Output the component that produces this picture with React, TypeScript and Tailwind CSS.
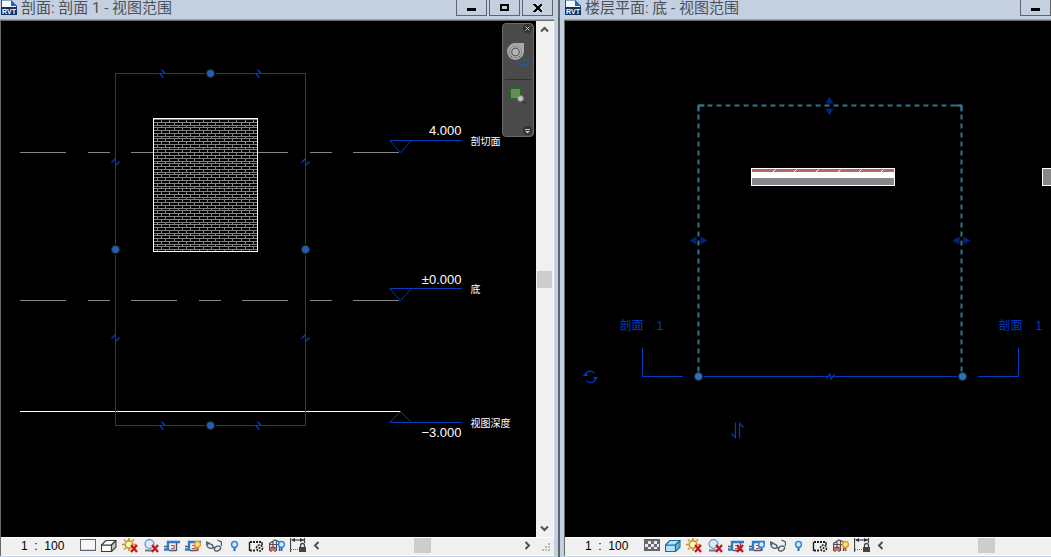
import type { ReactNode } from 'react';
import clsx from 'clsx';

const BLUE = '#003cc0';
const LABEL_FONT = '"Liberation Sans", "Noto Sans CJK SC", sans-serif';

function RvtLogo() {
  return (
    <svg width="16" height="16" viewBox="0 0 16 16" className="shrink-0" aria-hidden="true">
      <path d="M0.5 0H10L15.5 5V9H0.5Z" fill="#f4f8fc" stroke="#1d5593" />
      <path d="M10 0H16V6Z" fill="#c4d0e0" />
      <path d="M10 0L16 6H10Z" fill="#1d66b4" />
      <rect x="0" y="7" width="16" height="8" fill="#0d3468" />
      <text x="8" y="14" textAnchor="middle" fontSize="7" fontWeight="700" fill="#fff" fontFamily={LABEL_FONT}>RVT</text>
    </svg>
  );
}

function RedX() {
  return <path d="M9 7l6 7M15 7l-6 7" stroke="#c8141c" strokeWidth="2.2" fill="none" />;
}

function Bulb({ x = 0, y = 0, on = false }: { x?: number; y?: number; on?: boolean }) {
  return (
    <g transform={`translate(${x} ${y})`}>
      <circle cx="3.5" cy="3.5" r="2.9" fill={on ? '#ffe08c' : '#d8edff'} stroke={on ? '#f09a1a' : '#2f86dc'} strokeWidth="1.5" />
      <path d="M2.5 7h2v3h-2z" fill={on ? '#8a6a3a' : '#2468b4'} />
    </g>
  );
}

function Sun() {
  return (
    <>
      <circle cx="7" cy="6.5" r="3.8" fill="#fff3c8" stroke="#c89018" strokeWidth="1.5" />
      <path d="M7 0v2M7 11v2M0 6.5h2.500M12 6.5h2M2 1.5l1.500 1.500M10.500 3l1.500-1.500M2 11.500l1.500-1.500" stroke="#c89018" strokeWidth="1.6" />
      <RedX />
    </>
  );
}

function Crop({ children }: { children?: ReactNode }) {
  return (
    <>
      <path d="M0 8.5h3M5 12.5h7M12.5 5v8" stroke="#50565e" strokeWidth="1.4" fill="none" />
      <path d="M7 7.5h3v3H7" stroke="#c84848" strokeWidth="1.2" fill="none" />
      <path d="M0 11.500H4V4H16" stroke="#2e7cc4" strokeWidth="2.4" fill="none" />
      {children}
    </>
  );
}

function Cube({ fill }: { fill: string }) {
  return (
    <g stroke={fill === '#ffffff' ? '#3c3c3c' : '#1c6c9c'} strokeWidth="1.1" strokeLinejoin="round">
      <path d="M0.5 7h10v6.500h-10z" fill={fill} />
      <path d="M0.5 7l4.500-4.500h10l-4.500 4.500z" fill={fill} />
      <path d="M10.5 13.5l4.500-4.500v-6.500l-4.500 4.500z" fill={fill === '#ffffff' ? '#c4c4c8' : '#6cb4e4'} />
    </g>
  );
}

type ViewTool = { label: string; icon: ReactNode };

function viewTools(plan: boolean): ViewTool[] {
  return [
    {
      label: '详细程度',
      icon: (
        <>
          <rect x="0.5" y="1.5" width="15" height="11" fill={plan ? '#686c70' : '#f6f6f6'} stroke="#5c6470" />
          {plan && <path d="M4 3h3v3H4zM10 3h3v3h-3zM7 6h3v3H7zM4 9h3v2H4zM10 9h3v2h-3zM1 6h3v3H1zM13 6h2v3h-2z" fill="#e8e8e8" />}
          {!plan && <path d="M1 11.5h14" stroke="#d4d8dc" />}
        </>
      ),
    },
    { label: '视觉样式', icon: <Cube fill={plan ? '#b4e0fa' : '#ffffff'} /> },
    { label: '日光路径', icon: <Sun /> },
    {
      label: '阴影',
      icon: (
        <>
          <circle cx="6.5" cy="6" r="4.4" fill="#dcebf6" stroke="#5a9cd4" strokeWidth="1.4" />
          <path d="M2 12.5h8" stroke="#707880" strokeWidth="2" />
          <RedX />
        </>
      ),
    },
    { label: '裁剪视图', icon: <Crop>{plan && <RedX />}</Crop> },
    { label: '显示裁剪区域', icon: <Crop><Bulb x={9} y={3} on={!plan} /></Crop> },
    {
      label: '临时隐藏',
      icon: (
        <g fill="#dff0fa" stroke="#4c5a68" strokeWidth="1.3">
          <path d="M1 7L0.5 4L4 5.500M15.500 8V4L11.500 2" fill="none" />
          <ellipse cx="4" cy="8" rx="3.2" ry="2" transform="rotate(25 4 8)" />
          <ellipse cx="11.5" cy="10.5" rx="3.2" ry="2.3" transform="rotate(-25 11.5 10.5)" />
          <path d="M7 9.500l2 1" fill="none" />
        </g>
      ),
    },
    { label: '显示隐藏的图元', icon: <Bulb x={4} y={3} /> },
    {
      label: '临时视图属性',
      icon: (
        <>
          <path d="M2 4h12M2 12.5h6" stroke="#202020" strokeWidth="2" strokeDasharray="2 1" />
          <path d="M1.5 4v9M14 4v3" stroke="#202020" strokeWidth="1.4" />
          <circle cx="11.5" cy="10" r="3" fill="#f0f0f0" stroke="#202020" strokeWidth="1.6" strokeDasharray="2 1" />
          <circle cx="11.5" cy="10" r="1" fill="#202020" />
        </>
      ),
    },
    {
      label: '显示分析模型',
      icon: (
        <>
          <path d="M0.500 13V5.500L6 2l6 2.500M0 6.500h12M4 4v9M7.5 3v10M10.5 4v9" stroke="#4c5058" strokeWidth="1.2" fill="none" />
          <path d="M2 14V9.500h4V14" stroke="#c83028" strokeWidth="1.4" fill="none" />
          <Bulb x={9} y={3} on={plan} />
        </>
      ),
    },
    {
      label: '显示约束',
      icon: (
        <>
          <path d="M0.5 0v14M14.5 0v5" stroke="#404448" strokeWidth="1.2" />
          <path d="M2 2h12" stroke="#404448" strokeWidth="1.2" />
          <path d="M1 2l4-2v4zM14 2l-4-2v4z" fill="#303438" />
          <path d="M1 11.500h8" stroke="#606468" strokeDasharray="1 1" />
          <path d="M10.5 9V7.5a2 2 0 0 1 4 0V9" stroke="#404448" strokeWidth="1.3" fill="none" />
          <rect x="9" y="9" width="7" height="5" fill="#404448" />
        </>
      ),
    },
  ];
}

function Chevron({ d }: { d: string }) {
  return (
    <svg width="9" height="9" viewBox="0 0 9 9" aria-hidden="true">
      <path d={d} stroke="#505050" strokeWidth="2" fill="none" />
    </svg>
  );
}

function TitleButton({ label, children }: { label: string; children: ReactNode }) {
  return (
    <button aria-label={label} className="flex h-4 w-[31px] items-center justify-center border border-t-0 border-[#5f656c]">
      <svg width="9" height="9" viewBox="0 0 9 9" shapeRendering="crispEdges" aria-hidden="true">{children}</svg>
    </button>
  );
}

function ViewWindow({ title, plan = false, children }: { title: string; plan?: boolean; children: ReactNode }) {
  return (
    <section
      className={clsx(
        'flex shrink-0 flex-col border-r-2 border-[#5f656e] bg-[#c4d0e0]',
        plan ? 'min-w-[564px] pl-1' : 'min-w-full',
      )}
    >
      <header className="flex h-[19px] items-start pr-[5px] pl-px">
        <RvtLogo />
        <h2 className="ml-1 font-['Roboto','Noto_Sans_CJK_SC',sans-serif] text-[15px] leading-4 whitespace-nowrap text-[#4a525c]">{title}</h2>
        <div className="ml-auto flex gap-0.5">
          <TitleButton label="最小化"><path d="M0 5h9v3H0z" /></TitleButton>
          <TitleButton label="最大化"><path d="M0 1h9v7H0zM2 3v3h5V3z" fillRule="evenodd" /></TitleButton>
          <TitleButton label="关闭"><path d="M0 1h2l2.500 2.500L7 1h2v1L6 5l3 3v1H7L4.500 6.500L2 9H0V8l3-3L0 2z" /></TitleButton>
        </div>
      </header>

      <div className="mr-1 flex flex-1 flex-col border-t border-[#a0a4a8]">
        <div className="flex flex-1 flex-col border-t border-l border-[#696969]">
          <div className="flex min-h-[460px] flex-1">
            <div className="relative flex min-w-0 flex-1 bg-black">{children}</div>
            <div className="flex w-[18px] flex-col items-center justify-between border-r border-white bg-[#f0f0f0] py-1">
              <button aria-label="向上滚动"><Chevron d="M1 6.500L4.500 3L8 6.500" /></button>
              <div className="h-[17px] w-[15px] bg-[#cdcdcd]" />
              <button aria-label="向下滚动"><Chevron d="M1 2.500L4.500 6L8 2.500" /></button>
            </div>
          </div>

          <footer className="flex h-[19px] items-center border-y border-white bg-[#f0f0f0] pb-0.5">
            <button className="w-[76px] pl-5 text-left text-[12px] leading-4 whitespace-pre text-black">1  :  100</button>
            <div className="flex">
              {viewTools(plan).map(t => (
                <button key={t.label} aria-label={t.label} className="flex w-[21px] justify-center">
                  <svg width="16" height="16" viewBox="0 0 16 16" aria-hidden="true">{t.icon}</svg>
                </button>
              ))}
            </div>
            <button aria-label="向左滚动" className="ml-1"><Chevron d="M6.500 1L3 4.500L6.500 8" /></button>
            <div className="flex flex-1 justify-center">
              <div className="h-[15px] w-[17px] bg-[#cdcdcd]" />
            </div>
            <button aria-label="向右滚动"><Chevron d="M2.500 1L6 4.500L2.500 8" /></button>
            <svg width="9" height="9" viewBox="0 0 9 9" className="mt-1 mr-[3px] ml-2.5" aria-hidden="true">
              <path d="M6 0h2v2H6zM3 3h2v2H3zM6 3h2v2H6zM0 6h2v2H0zM3 6h2v2H3zM6 6h2v2H6z" fill="#bcbcbc" />
            </svg>
          </footer>
        </div>
      </div>
      <div className="h-px" />
    </section>
  );
}

function NavigationBar() {
  return (
    <nav className="absolute top-0.5 right-0.5 flex h-[114px] w-8 flex-col rounded border border-[#6a6a6a] bg-[#4a4a4a]">
      <button aria-label="关闭导航栏" className="mr-px self-end">
        <svg width="9" height="9" viewBox="0 0 9 9" aria-hidden="true">
          <circle cx="4.500" cy="4.500" r="4.500" fill="#303030" />
          <path d="M2.500 2.500l4 4M6.500 2.500l-4 4" stroke="#c8c8c8" />
        </svg>
      </button>
      <button aria-label="二维控制盘" className="mt-2.5 ml-1">
        <svg width="24" height="24" viewBox="0 0 24 24" aria-hidden="true">
          <path d="M9 0h8v9a8.500 8.500 0 1 1-8-9z" fill="#a8a8a8" />
          <circle cx="8.500" cy="9" r="6" fill="#b4b4b4" stroke="#888" />
          <circle cx="8.500" cy="9" r="3.800" fill="none" stroke="#585858" strokeWidth="1.200" />
          <path d="M5 13l-1.500 1.500M12 13l1.500 1.500" stroke="#585858" />
          <text x="11" y="22" fontSize="9" fill="#1d5ca8" fontFamily={LABEL_FONT}>2D</text>
        </svg>
      </button>
      <div className="mx-0.5 mt-3 h-px bg-[#303030]" />
      <button aria-label="区域放大" className="mt-2 ml-[7px]">
        <svg width="17" height="17" viewBox="0 0 17 17" aria-hidden="true">
          <rect x="0.500" y="0.500" width="10" height="10" fill="#698a5c" stroke="#216b21" />
          <path d="M12 12l4 4" stroke="#383838" strokeWidth="1.500" />
          <circle cx="10.500" cy="10.500" r="3" fill="#c0c0c0" stroke="#787878" />
        </svg>
      </button>
      <button aria-label="导航栏选项" className="mt-auto mr-px mb-px self-end">
        <svg width="9" height="9" viewBox="0 0 9 9" aria-hidden="true">
          <circle cx="4.500" cy="4.500" r="4.500" fill="#303030" />
          <path d="M2 3.500h5" stroke="#c8c8c8" />
          <path d="M2 5h5L4.500 7.500z" fill="#c8c8c8" />
        </svg>
      </button>
    </nav>
  );
}

function Grip({ x, y }: { x: number; y: number }) {
  return (
    <>
      <circle cx={x} cy={y} r="5.5" fill="#000" />
      <circle cx={x} cy={y} r="4" fill="#2460a8" stroke="#16283c" />
    </>
  );
}

// break-line control drawn across an edge of the crop box
function BreakMark({ x, y, vertical = false }: { x: number; y: number; vertical?: boolean }) {
  return vertical
    ? <path d={`M${x - 4} ${y + 1}l4 -4M${x} ${y + 4}l4 -4`} stroke={BLUE} strokeWidth="1.4" />
    : <path d={`M${x - 1} ${y - 4}l4 4M${x - 3} ${y}l4 4`} stroke={BLUE} strokeWidth="1.4" />;
}

const WALL = { x: 152, y: 97, w: 104, h: 133 };

function BrickWall() {
  const courses: string[] = [];
  const count = 48;
  for (let i = 0; i < count; i++) {
    const top = Math.round(WALL.y + 1 + (i * WALL.h) / count);
    const next = Math.min(WALL.y + WALL.h, Math.round(WALL.y + 1 + ((i + 1) * WALL.h) / count));
    courses.push(`M${WALL.x} ${top}h${WALL.w}`);
    for (let j = 0; j < 13; j++) {
      const x = Math.round(WALL.x + (i % 2 ? 4 : 8) + j * 8.35);
      if (x < WALL.x + WALL.w) courses.push(`M${x} ${top}V${next}`);
    }
  }
  return (
    <g shapeRendering="crispEdges">
      <rect x={WALL.x} y={WALL.y} width={WALL.w} height={WALL.h} fill="#000" />
      <path d={courses.join('')} stroke="#858285" />
      <path d={`M${WALL.x} 131h${WALL.w}`} stroke="#858285" />
      <rect x={WALL.x} y={WALL.y} width={WALL.w} height={WALL.h} fill="none" stroke="#fff" />
    </g>
  );
}

const LEVELS = [
  { name: '剖切面', value: '4.000', line: 119, tip: 131, valueY: 113, nameY: 123 },
  { name: '底', value: '±0.000', line: 267, tip: 279, valueY: 262, nameY: 271 },
  { name: '视图深度', value: '−3.000', line: 401, tip: 390, valueY: 415, nameY: 405 },
];

function SectionDrawing() {
  return (
    <svg className="h-auto w-full" role="img" aria-label="剖面 1">
      <g transform="translate(0.5 0.5)" fill="none">
        <g shapeRendering="crispEdges">
          <path d="M18 131H399M18 279H399" stroke="#858585" strokeDasharray="46 22 22 21" />
          <path d="M18 390H399" stroke="#fff" />
          <rect x="114" y="52" width="190" height="352" stroke={BLUE} />
        </g>
        <BrickWall />
        {[52, 404].map(y => (
          <g key={y}>
            <BreakMark x={161} y={y} />
            <Grip x={209} y={y} />
            <BreakMark x={257} y={y} />
          </g>
        ))}
        {[114, 304].map(x => (
          <g key={x}>
            <BreakMark x={x} y={140} vertical />
            <Grip x={x} y={228} />
            <BreakMark x={x} y={316} vertical />
          </g>
        ))}
        {LEVELS.map(l => (
          <g key={l.name}>
            <path d={`M388 ${l.line}H460`} stroke={BLUE} shapeRendering="crispEdges" />
            <path d={`M388 ${l.line}L399 ${l.tip}L410 ${l.line}`} stroke={BLUE} />
            <g fill="#fff" fontFamily={LABEL_FONT}>
              <text x="460" y={l.valueY} textAnchor="end" fontSize="13">{l.value}</text>
              <text x="469" y={l.nameY} fontSize="10">{l.name}</text>
            </g>
          </g>
        ))}
      </g>
    </svg>
  );
}

function PlanDrawing() {
  return (
    <svg className="h-auto w-full" role="img" aria-label="楼层平面 底">
      <g transform="translate(0.5 0.5)" fill="none">
        <path d="M133 84H396M133 84V355M396 84V355" stroke="#347488" strokeWidth="2" strokeDasharray="5 4" />
        <path d="M133 90V84H139M390 84H396V90" stroke="#347488" strokeWidth="2" />

        <g shapeRendering="crispEdges">
          <rect x="186" y="147" width="143" height="17" fill="#fff" stroke="#fff" />
          <rect x="186" y="147" width="142" height="3" fill="#b9666a" />
          <rect x="186" y="156" width="142" height="7" fill="#87878b" />
          <rect x="477" y="147" width="20" height="17" fill="#87878b" stroke="#fff" />
        </g>
        <path d="M207 151l3 -3M228 151l3 -3M250 151l3 -3M272 151l3 -3M293 151l3 -3M315 151l3 -3" stroke="#fff" />

        <g fill="#00247e">
          <path d="M264 75l4 7h-8zM264 94l4 -7h-8z" />
          {[133, 396].map(x => (
            <path key={x} d={`M${x - 9} 219l7 -4v8zM${x + 9} 219l-7 -4v8z`} />
          ))}
        </g>

        <g stroke={BLUE}>
          <path d="M77 326V355H117M138 355H262M268 355H391M412 355H453V326" shapeRendering="crispEdges" />
          <path d="M261 357l4 -5M264 352l2 6M265 358l4 -5" strokeWidth="1.3" />
          <path d="M20 353a5 5 0 0 1 9 -1M30 357a5 5 0 0 1 -9 2" strokeWidth="1.2" />
          <path d="M18 354h4l-2 -2zM28 356h4l-2 2z" fill={BLUE} />
          <path d="M170 401V416l-4 -4M174 417V402l4 4" strokeWidth="1.2" />
        </g>
        {[133, 397].map(x => <circle key={x} cx={x} cy="355" r="4" fill="#2c72b8" stroke="#16303c" />)}

        <g fill={BLUE} fontFamily={LABEL_FONT} fontSize="12">
          <text y="308"><tspan x="54">剖面 </tspan><tspan x="91">1</tspan></text>
          <text y="308"><tspan x="433">剖面 </tspan><tspan x="470">1</tspan></text>
        </g>
      </g>
    </svg>
  );
}

export default function App() {
  return (
    <main className="grid min-h-screen grid-cols-[560fr_491fr] overflow-hidden bg-[#c4d0e0] font-['Liberation_Sans','Noto_Sans_CJK_SC',sans-serif]">
      <div className="flex min-w-0 overflow-hidden">
        <ViewWindow title="剖面: 剖面 1 - 视图范围">
          <SectionDrawing />
          <NavigationBar />
        </ViewWindow>
      </div>
      <div className="flex min-w-0 overflow-hidden">
        <ViewWindow title="楼层平面: 底 - 视图范围" plan>
          <PlanDrawing />
        </ViewWindow>
      </div>
    </main>
  );
}
